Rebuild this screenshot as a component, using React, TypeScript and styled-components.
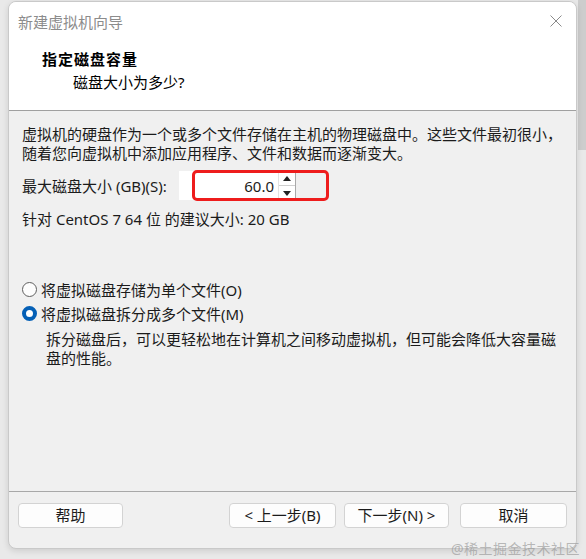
import styled, { createGlobalStyle } from "styled-components";

const GlobalStyle = createGlobalStyle`
    html, body {
        margin: 0;
        padding: 0;
        background: #e9e9e9;
    }
    body {
        font-family: "Noto Sans", "Noto Sans CJK SC", sans-serif;
        color: #1b1b1b;
    }
`;

const Page = styled.div`
    position: relative;
    width: 586px;
    height: 559px;
    overflow: hidden;
    background:
        linear-gradient(to right, transparent 578px, #cdcdcd 578px) top / 100% 150px no-repeat,
        #e9e9e9;
`;

const Window = styled.div`
    margin: 1px 0 0 8px;
    width: 569px;
    height: 548px;
    box-sizing: border-box;
    display: flex;
    flex-direction: column;
    border: 1px solid #c9c9c9;
    border-radius: 8px;
    overflow: hidden;
    background: #f0f0f0;
    box-shadow: 0 2px 6px rgba(0, 0, 0, 0.12);
`;

const Header = styled.div`
    height: 108px;
    background: #ffffff;
    border-bottom: 1px solid #a0a0a0;
    display: flex;
    flex-direction: column;
`;

const TitleBar = styled.div`
    height: 39px;
    display: flex;
    align-items: center;
    justify-content: space-between;
    padding: 0 14px 2px 9px;
`;

const Title = styled.span`
    font-size: 15px;
    color: #8c8c8c;
`;

const CloseIcon = styled.svg`
    width: 12px;
    height: 12px;
    margin-top: -2px;
`;

const Heading = styled.div`
    margin-top: 6px;
    padding-left: 33px;
    font-size: 15px;
    line-height: 20px;
    font-weight: 700;
    letter-spacing: 1px;
    color: #000;
`;

const SubHeading = styled.div`
    margin-top: 3px;
    padding-left: 64px;
    font-size: 15px;
    line-height: 20px;
    color: #000;
`;

const Body = styled.div`
    flex: 1;
    padding: 14px 13px 0;
    display: flex;
    flex-direction: column;
`;

const Line = styled.div<{ $top?: number; $indent?: number }>`
    margin-top: ${(p) => p.$top ?? 0}px;
    padding-left: ${(p) => p.$indent ?? 0}px;
    font-size: 15px;
    line-height: 19px;
    white-space: nowrap;
`;

const SizeRow = styled.div`
    position: relative;
    margin-top: 8px;
    height: 29px;
    display: flex;
    align-items: center;
`;

const SizeLabel = styled.label`
    width: 157px;
    font-size: 15px;
    white-space: nowrap;
`;

const SpinBox = styled.div`
    width: 117px;
    height: 29px;
    display: flex;
    background: #ffffff;
`;

const SpinValue = styled.div`
    flex: 1;
    display: flex;
    align-items: center;
    justify-content: flex-end;
    padding-right: 4px;
    font-size: 15px;
`;

const SpinButtons = styled.div`
    width: 16px;
    display: flex;
    flex-direction: column;
    border-left: 1px solid #e2e2e2;
    border-right: 1px solid #a9a9a9;
`;

const SpinButton = styled.div<{ $down?: boolean }>`
    flex: 1;
    display: flex;
    align-items: center;
    justify-content: center;
    border-top: ${(p) => (p.$down ? "1px solid #cfcfcf" : "none")};
`;

const Highlight = styled.div`
    position: absolute;
    left: 170px;
    top: -1px;
    width: 137px;
    height: 31px;
    box-sizing: border-box;
    border: 3px solid #ee1c1c;
    border-radius: 5px;
    pointer-events: none;
`;

const RadioGroup = styled.div`
    margin-top: 48px;
    display: flex;
    flex-direction: column;
`;

const RadioRow = styled.div`
    height: 24px;
    display: flex;
    align-items: center;
    gap: 4px;
    font-size: 15px;
    white-space: nowrap;
`;

const RadioDot = styled.span<{ $checked?: boolean }>`
    width: 15px;
    height: 15px;
    box-sizing: border-box;
    border-radius: 50%;
    background: ${(p) => (p.$checked ? "#ffffff" : "#fdfdfd")};
    border: ${(p) => (p.$checked ? "4.5px solid #0560b6" : "1px solid #5f5f5f")};
`;

const Footer = styled.div`
    height: 45px;
    border-top: 1px solid #a8a8a8;
    display: flex;
    align-items: flex-start;
    padding: 11px 9px 0;
`;

const Button = styled.button<{ $width: number; $gap?: number }>`
    width: ${(p) => p.$width}px;
    height: 25px;
    margin-left: ${(p) => p.$gap ?? 0}px;
    padding: 0;
    background: #fdfdfd;
    border: 1px solid #d3d3d3;
    border-radius: 4px;
    font-family: "Noto Sans", "Noto Sans CJK SC", sans-serif;
    font-size: 15px;
    color: #1b1b1b;
    line-height: 1;
`;

const Spacer = styled.div`
    flex: 1;
`;

const Watermark = styled.div`
    position: absolute;
    right: 6px;
    bottom: 1px;
    font-size: 14px;
    color: rgba(150, 150, 150, 0.65);
    letter-spacing: 0.5px;
`;

const Arrow = ({ down }: { down?: boolean }) => (
    <svg width="8" height="5" viewBox="0 0 8 5">
        <polygon points={down ? "0,0 8,0 4,5" : "0,5 8,5 4,0"} fill="#222" />
    </svg>
);

const App = () => {
    return (
        <Page>
            <GlobalStyle />
            <Window>
                <Header>
                    <TitleBar>
                        <Title>新建虚拟机向导</Title>
                        <CloseIcon viewBox="0 0 12 12">
                            <path d="M0.5 0.5 L11.5 11.5 M11.5 0.5 L0.5 11.5" stroke="#8a8a8a" strokeWidth="1" />
                        </CloseIcon>
                    </TitleBar>
                    <Heading>指定磁盘容量</Heading>
                    <SubHeading>磁盘大小为多少?</SubHeading>
                </Header>
                <Body>
                    <Line>虚拟机的硬盘作为一个或多个文件存储在主机的物理磁盘中。这些文件最初很小，</Line>
                    <Line>随着您向虚拟机中添加应用程序、文件和数据而逐渐变大。</Line>
                    <SizeRow>
                        <SizeLabel>最大磁盘大小 (GB)(S):</SizeLabel>
                        <SpinBox>
                            <SpinValue>60.0</SpinValue>
                            <SpinButtons>
                                <SpinButton>
                                    <Arrow />
                                </SpinButton>
                                <SpinButton $down>
                                    <Arrow down />
                                </SpinButton>
                            </SpinButtons>
                        </SpinBox>
                        <Highlight />
                    </SizeRow>
                    <Line $top={10}>针对 CentOS 7 64 位 的建议大小: 20 GB</Line>
                    <RadioGroup>
                        <RadioRow>
                            <RadioDot />
                            将虚拟磁盘存储为单个文件(O)
                        </RadioRow>
                        <RadioRow>
                            <RadioDot $checked />
                            将虚拟磁盘拆分成多个文件(M)
                        </RadioRow>
                    </RadioGroup>
                    <Line $top={5} $indent={24}>
                        拆分磁盘后，可以更轻松地在计算机之间移动虚拟机，但可能会降低大容量磁
                    </Line>
                    <Line $indent={24}>盘的性能。</Line>
                </Body>
                <Footer>
                    <Button $width={105}>帮助</Button>
                    <Spacer />
                    <Button $width={107}>&lt; 上一步(B)</Button>
                    <Button $width={105} $gap={8}>下一步(N) &gt;</Button>
                    <Button $width={107} $gap={11}>取消</Button>
                </Footer>
            </Window>
            <Watermark>@稀土掘金技术社区</Watermark>
        </Page>
    );
};

export default App;
